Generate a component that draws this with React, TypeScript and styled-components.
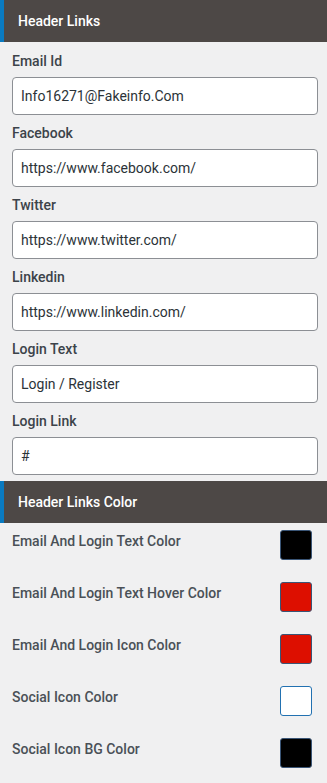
import styled, { createGlobalStyle } from "styled-components";

const GlobalStyle = createGlobalStyle`
  body {
    margin: 0;
    background: #f0f0f1;
    font-family: Roboto, "Liberation Sans", sans-serif;
  }
`;

const Panel = styled.div`
  width: 327px;
  background: #f0f0f1;
`;

const SectionHeader = styled.div`
  height: 42px;
  box-sizing: border-box;
  display: flex;
  align-items: center;
  padding-left: 14px;
  background: #4d4846;
  border-left: 4px solid #0a7ac0;
  color: #fff;
  font-size: 14px;
  font-weight: 500;
`;

const Fields = styled.div`
  display: flex;
  flex-direction: column;
  gap: 8px;
  padding: 9px 9px 6px 12px;
`;

const Field = styled.div`
  display: flex;
  flex-direction: column;
  gap: 6px;
`;

const Label = styled.label`
  font-size: 14px;
  line-height: 20px;
  font-weight: 500;
  color: #3c434a;
`;

const TextInput = styled.input`
  box-sizing: border-box;
  width: 100%;
  height: 38px;
  padding: 0 8px;
  border: 1px solid #8c8f94;
  border-radius: 4px;
  background: #fff;
  font-family: inherit;
  font-size: 14px;
  color: #2c3338;
  outline: none;
`;

const ColorList = styled.div`
  display: flex;
  flex-direction: column;
  gap: 22px;
  padding: 7px 15px 20px 12px;
`;

const ColorRow = styled.div`
  display: flex;
  justify-content: space-between;
  align-items: flex-start;
`;

const ColorLabel = styled.span`
  font-size: 14px;
  line-height: 22px;
  font-weight: 500;
  color: #4a5057;
`;

const Swatch = styled.div<{ $color: string }>`
  box-sizing: border-box;
  width: 32px;
  height: 30px;
  border-radius: 3px;
  background: ${(p) => p.$color};
  border: 1px solid ${(p) => (p.$color === "#ffffff" ? "#2271b1" : "#3a5576")};
`;

const links = [
  { label: "Email Id", value: "Info16271@Fakeinfo.Com" },
  { label: "Facebook", value: "https://www.facebook.com/" },
  { label: "Twitter", value: "https://www.twitter.com/" },
  { label: "Linkedin", value: "https://www.linkedin.com/" },
  { label: "Login Text", value: "Login / Register" },
  { label: "Login Link", value: "#" },
];

const colors = [
  { label: "Email And Login Text Color", color: "#000000" },
  { label: "Email And Login Text Hover Color", color: "#dd0f00" },
  { label: "Email And Login Icon Color", color: "#dd0f00" },
  { label: "Social Icon Color", color: "#ffffff" },
  { label: "Social Icon BG Color", color: "#000000" },
];

export default function App() {
  return (
    <Panel>
      <GlobalStyle />
      <SectionHeader>Header Links</SectionHeader>
      <Fields>
        {links.map((l) => (
          <Field key={l.label}>
            <Label>{l.label}</Label>
            <TextInput defaultValue={l.value} />
          </Field>
        ))}
      </Fields>
      <SectionHeader>Header Links Color</SectionHeader>
      <ColorList>
        {colors.map((c) => (
          <ColorRow key={c.label}>
            <ColorLabel>{c.label}</ColorLabel>
            <Swatch $color={c.color} />
          </ColorRow>
        ))}
      </ColorList>
    </Panel>
  );
}
